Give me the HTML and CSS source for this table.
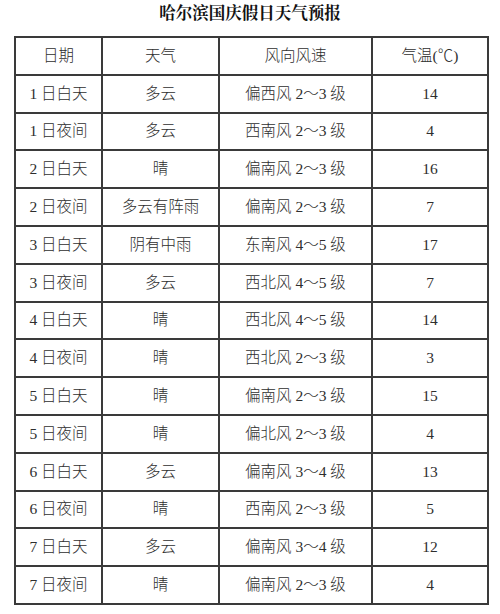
FILE: index.html
```html
<!DOCTYPE html>
<html lang="zh-CN">
<head>
<meta charset="utf-8">
<link rel="stylesheet" href="styles.css">
</head>
<body>
<div class="page">
  <h1 class="title">哈尔滨国庆假日天气预报</h1>
  <table class="forecast">
    <colgroup>
      <col class="c1"><col class="c2"><col class="c3"><col class="c4">
    </colgroup>
    <tr><td>日期</td><td>天气</td><td>风向风速</td><td>气温(℃)</td></tr>
    <tr><td>1 日白天</td><td>多云</td><td>偏西风 2～3 级</td><td>14</td></tr>
    <tr><td>1 日夜间</td><td>多云</td><td>西南风 2～3 级</td><td>4</td></tr>
    <tr><td>2 日白天</td><td>晴</td><td>偏南风 2～3 级</td><td>16</td></tr>
    <tr><td>2 日夜间</td><td>多云有阵雨</td><td>偏南风 2～3 级</td><td>7</td></tr>
    <tr><td>3 日白天</td><td>阴有中雨</td><td>东南风 4～5 级</td><td>17</td></tr>
    <tr><td>3 日夜间</td><td>多云</td><td>西北风 4～5 级</td><td>7</td></tr>
    <tr><td>4 日白天</td><td>晴</td><td>西北风 4～5 级</td><td>14</td></tr>
    <tr><td>4 日夜间</td><td>晴</td><td>西北风 2～3 级</td><td>3</td></tr>
    <tr><td>5 日白天</td><td>晴</td><td>偏南风 2～3 级</td><td>15</td></tr>
    <tr><td>5 日夜间</td><td>晴</td><td>偏北风 2～3 级</td><td>4</td></tr>
    <tr><td>6 日白天</td><td>多云</td><td>偏南风 3～4 级</td><td>13</td></tr>
    <tr><td>6 日夜间</td><td>晴</td><td>西南风 2～3 级</td><td>5</td></tr>
    <tr><td>7 日白天</td><td>多云</td><td>偏南风 3～4 级</td><td>12</td></tr>
    <tr><td>7 日夜间</td><td>晴</td><td>偏南风 2～3 级</td><td>4</td></tr>
  </table>
</div>
</body>
</html>
```
FILE: styles.css
```css
html, body {
  margin: 0;
  padding: 0;
  background: #ffffff;
}
.page {
  width: 500px;
  padding-top: 1px;
  font-family: "Liberation Serif", "Noto Sans CJK SC", serif;
  color: #2e2e2e;
}
.title {
  margin: 0;
  height: 26px;
  line-height: 26px;
  text-align: center;
  font-size: 16.5px;
  font-weight: bold;
  color: #111;
  font-family: "Liberation Serif", "Noto Serif CJK SC", "Noto Sans CJK SC", serif;
}
.forecast {
  margin: 9px 0 0 14px;
  width: 473px;
  border-collapse: collapse;
  table-layout: fixed;
  font-size: 15.5px;
  font-weight: 300;
}
.c1 { width: 87px; }
.c2 { width: 117px; }
.c3 { width: 153px; }
.c4 { width: 116px; }
.forecast tr {
  height: 37.8px;
}
.forecast td {
  border: 2px solid #3a3a3a;
  text-align: center;
  vertical-align: middle;
  padding: 0;
  line-height: 20px;
}
```
